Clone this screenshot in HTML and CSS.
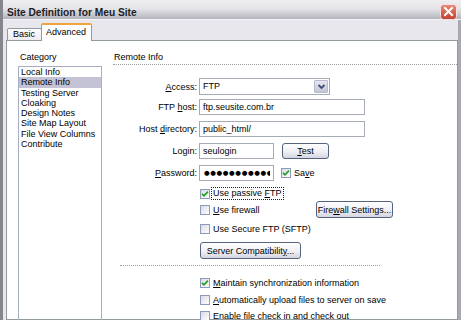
FILE: index.html
```html
<!DOCTYPE html>
<html lang="pt">
<head>
  <meta charset="UTF-8">
  <meta name="viewport" content="width=device-width, initial-scale=1.0">
  <title>Site Definition for Meu Site</title>
  <link rel="stylesheet" href="styles.css">
</head>
<body>
  <div class="window">
    <div class="titlebar">
      <span class="title">Site Definition for Meu Site</span>
      <span class="close">
        <svg width="17" height="16" viewBox="0 0 17 16">
          <defs>
            <linearGradient id="red" x1="0" y1="0" x2="0" y2="1">
              <stop offset="0" stop-color="#ec8a78"/>
              <stop offset="1" stop-color="#c2402e"/>
            </linearGradient>
          </defs>
          <rect x="0.5" y="0.5" width="16" height="15" rx="3" fill="url(#red)" stroke="#f2e4e2"/>
          <path d="M5 4 L12 11 M12 4 L5 11" stroke="#fff" stroke-width="2" stroke-linecap="square"/>
        </svg>
      </span>
    </div>

    <div class="client">
      <!-- Tabs -->
      <div class="tabs">
        <div class="tab">Basic</div>
        <div class="tab active">Advanced</div>
      </div>

      <div class="panel">
        <!-- Category list -->
        <div class="side">
          <div class="side-title">Category</div>
          <ul class="list">
            <li>Local Info</li>
            <li class="selected">Remote Info</li>
            <li>Testing Server</li>
            <li>Cloaking</li>
            <li>Design Notes</li>
            <li>Site Map Layout</li>
            <li>File View Columns</li>
            <li>Contribute</li>
          </ul>
        </div>

        <!-- Remote Info form -->
        <div class="main">
          <div class="section-title">Remote Info</div>

          <div class="form">
            <div class="row first">
              <label class="lbl"><u>A</u>ccess:</label>
              <div class="select">
                <span class="value">FTP</span>
                <span class="arrow">
                  <svg width="9" height="7" viewBox="0 0 9 7"><path d="M1.5 2 L4.5 5 L7.5 2" fill="none" stroke="#3f4f72" stroke-width="1.8"/></svg>
                </span>
              </div>
            </div>
            <div class="row">
              <label class="lbl">FTP <u>h</u>ost:</label>
              <input class="field" type="text" value="ftp.seusite.com.br" readonly>
            </div>
            <div class="row">
              <label class="lbl">Host <u>d</u>irectory:</label>
              <input class="field" type="text" value="public_html/" readonly>
            </div>
            <div class="row">
              <label class="lbl">Login:</label>
              <input class="field short" type="text" value="seulogin" readonly>
              <button class="btn test"><u>T</u>est</button>
            </div>
            <div class="row pw">
              <label class="lbl"><u>P</u>assword:</label>
              <input class="field short dots" type="text" value="●●●●●●●●●●●●●●" readonly>
              <span class="save"><span class="cb checked"><svg width="8" height="8" viewBox="0 0 8 8"><path d="M1 3.8 L3 5.8 L7 1.6" fill="none" stroke="#21a121" stroke-width="1.7"/></svg></span>Sa<u>v</u>e</span>
            </div>

            <div class="check-row">
              <span class="cb checked"><svg width="8" height="8" viewBox="0 0 8 8"><path d="M1 3.8 L3 5.8 L7 1.6" fill="none" stroke="#21a121" stroke-width="1.7"/></svg></span>
              <span class="focus">Use passive <u>F</u>TP</span>
            </div>
            <div class="check-row fw">
              <span class="cb"></span>
              <span class="fw-text"><u>U</u>se firewall</span>
              <button class="btn fw-btn">Fire<u>w</u>all Settings...</button>
            </div>
            <div class="check-row sftp">
              <span class="cb"></span>
              <span>Use Secure FTP (SFTP)</span>
            </div>
            <div class="btn-row">
              <button class="btn server">Server Compatibilit<u>y</u>...</button>
            </div>

            <div class="separator"></div>

            <div class="check-row sync">
              <span class="cb checked"><svg width="8" height="8" viewBox="0 0 8 8"><path d="M1 3.8 L3 5.8 L7 1.6" fill="none" stroke="#21a121" stroke-width="1.7"/></svg></span>
              <span><u>M</u>aintain synchronization information</span>
            </div>
            <div class="check-row auto">
              <span class="cb"></span>
              <span><u>A</u>utomatically upload files to server on save</span>
            </div>
            <div class="check-row checkout">
              <span class="cb"></span>
              <span>Enable file check in and check out</span>
            </div>
          </div>
        </div>
      </div>
    </div>
  </div>
</body>
</html>
```

FILE: styles.css
```css
* {
  box-sizing: border-box;
}
body {
  margin: 0;
  font-family: "Liberation Sans", Arial, sans-serif;
  font-size: 9px;
  color: #000;
  background: #e8e7ee;
}
.window {
  width: 461px;
  height: 320px;
  overflow: hidden;
  display: flex;
  flex-direction: column;
  border-left: 3px solid #85858d;
}

/* title bar */
.titlebar {
  flex: none;
  height: 20px;
  display: flex;
  justify-content: space-between;
  align-items: flex-start;
  background: linear-gradient(#efeff2 0%, #e4e4e9 45%, #c6c6ce 80%, #b3b3bb 100%);
  border-bottom: 1px solid #f6f6f8;
}
.title {
  padding: 7px 0 0 4px;
  font-weight: bold;
  font-size: 10.2px;
  line-height: 12px;
  color: #1e1e24;
}
.close {
  width: 17px;
  height: 16px;
  margin: 4px 4px 0 0;
}
.close svg {
  display: block;
}

/* dialog body */
.client {
  flex: 1;
  min-height: 0;
  display: flex;
  flex-direction: column;
  padding-left: 3px;
  border-right: 3px solid #a9a9b1;
  background: #e8e7ee;
}
.tabs {
  flex: none;
  height: 20px;
  display: flex;
  align-items: flex-end;
  padding-left: 1px;
}
.tab {
  width: 35px;
  height: 12px;
  padding-left: 5px;
  line-height: 10px;
  border: 1px solid #919b9c;
  border-bottom: none;
  border-radius: 2px 2px 0 0;
  background: linear-gradient(#fdfdfe, #ebebf1);
}
.tab.active {
  position: relative;
  z-index: 1;
  width: 51px;
  height: 18px;
  margin-left: -1px;
  margin-bottom: -1px;
  padding: 2px 0 0 4px;
  border-top: 2px solid #f0a43c;
  background: #fff;
}

.panel {
  flex: 1;
  min-height: 0;
  display: flex;
  padding: 10.5px 0 0 11px;
  border: 1px solid #919b9c;
  background: #fff;
}

/* category list */
.side {
  width: 84px;
  flex: none;
}
.side-title {
  height: 10px;
  line-height: 10px;
  padding-left: 2px;
  margin-bottom: 4.5px;
}
.list {
  list-style: none;
  margin: 0;
  padding: 0;
  height: 300px;
  border: 1px solid #a7adc2;
}
.list li {
  height: 10.3px;
  line-height: 10.3px;
  padding-left: 2px;
  white-space: nowrap;
}
.list li.selected {
  background: #c3c3d5;
}

/* remote info */
.main {
  width: 344px;
  margin-left: 11px;
  flex: none;
}
.section-title {
  line-height: 10px;
  padding: 0 0 2.5px 1px;
  border-bottom: 1px dotted #9a9a9a;
}
.form {
  margin-top: 13px;
}
.row {
  display: flex;
  align-items: center;
  height: 16px;
  margin-bottom: 6px;
}
.row.first {
  height: 17px;
  margin-bottom: 4px;
}
.row.pw {
  margin-bottom: 5px;
}
.lbl {
  width: 84px;
  margin-right: 2px;
  text-align: right;
  white-space: nowrap;
}
.field {
  width: 166px;
  height: 16px;
  margin: 0;
  padding: 0 3px;
  border: 1px solid #a5acb5;
  font-family: inherit;
  font-size: 9px;
  color: #000;
  background: #fff;
  outline: none;
}
.field.short {
  width: 75px;
}
.field.dots {
  padding-left: 4px;
  font-family: "DejaVu Sans", sans-serif;
  font-size: 6.5px;
  letter-spacing: 0.6px;
}
.select {
  width: 131px;
  height: 17px;
  display: flex;
  border: 1px solid #a5acb5;
  background: #fff;
}
.select .value {
  flex: 1;
  padding-left: 3px;
  line-height: 15px;
}
.select .arrow {
  width: 14px;
  margin: 1px;
  display: flex;
  align-items: center;
  justify-content: center;
  border: 1px solid #b7bbcf;
  border-radius: 1px;
  background: linear-gradient(#e6e6ef, #c4c5d7);
}
.select .arrow svg {
  display: block;
}

.btn {
  height: 16px;
  padding: 0;
  border: 1px solid #56637f;
  border-radius: 3px;
  font-family: inherit;
  font-size: 9px;
  line-height: 14px;
  color: #000;
  text-align: center;
  white-space: nowrap;
  background: linear-gradient(#ffffff 0%, #efeff4 55%, #d5d5e1 100%);
}
.btn.test {
  width: 47px;
  margin-left: 8px;
}
.btn.fw-btn {
  width: 77px;
  height: 17px;
}
.btn.server {
  width: 101px;
  height: 17px;
}

/* checkboxes */
.cb {
  flex: none;
  width: 10px;
  height: 10px;
  display: flex;
  align-items: center;
  justify-content: center;
  border: 1px solid #8e9abb;
  background: linear-gradient(135deg, #d9d9e4, #ffffff);
}
.cb svg {
  display: block;
}
.save {
  display: flex;
  align-items: center;
  margin-left: 7px;
}
.save .cb {
  margin-right: 3px;
}
.check-row {
  display: flex;
  align-items: center;
  height: 15px;
  padding-left: 87px;
  white-space: nowrap;
}
.check-row .cb {
  margin-right: 3px;
}
.focus {
  margin-left: -2px;
  padding: 0 1px;
  line-height: 11px;
  border: 1px dotted #222;
}
.check-row.fw {
  height: 17px;
}
.fw-text {
  width: 103px;
}
.check-row.sftp {
  margin-top: 3px;
}
.btn-row {
  margin-top: 6px;
  padding-left: 87px;
  height: 17px;
}
.separator {
  width: 260px;
  margin: 6px 0 0 7px;
  border-top: 1px dotted #a0a0a0;
}
.check-row.sync {
  margin-top: 9px;
}
.check-row.auto {
  margin-top: 2.5px;
}
.check-row.checkout {
  margin-top: 1px;
}
```
